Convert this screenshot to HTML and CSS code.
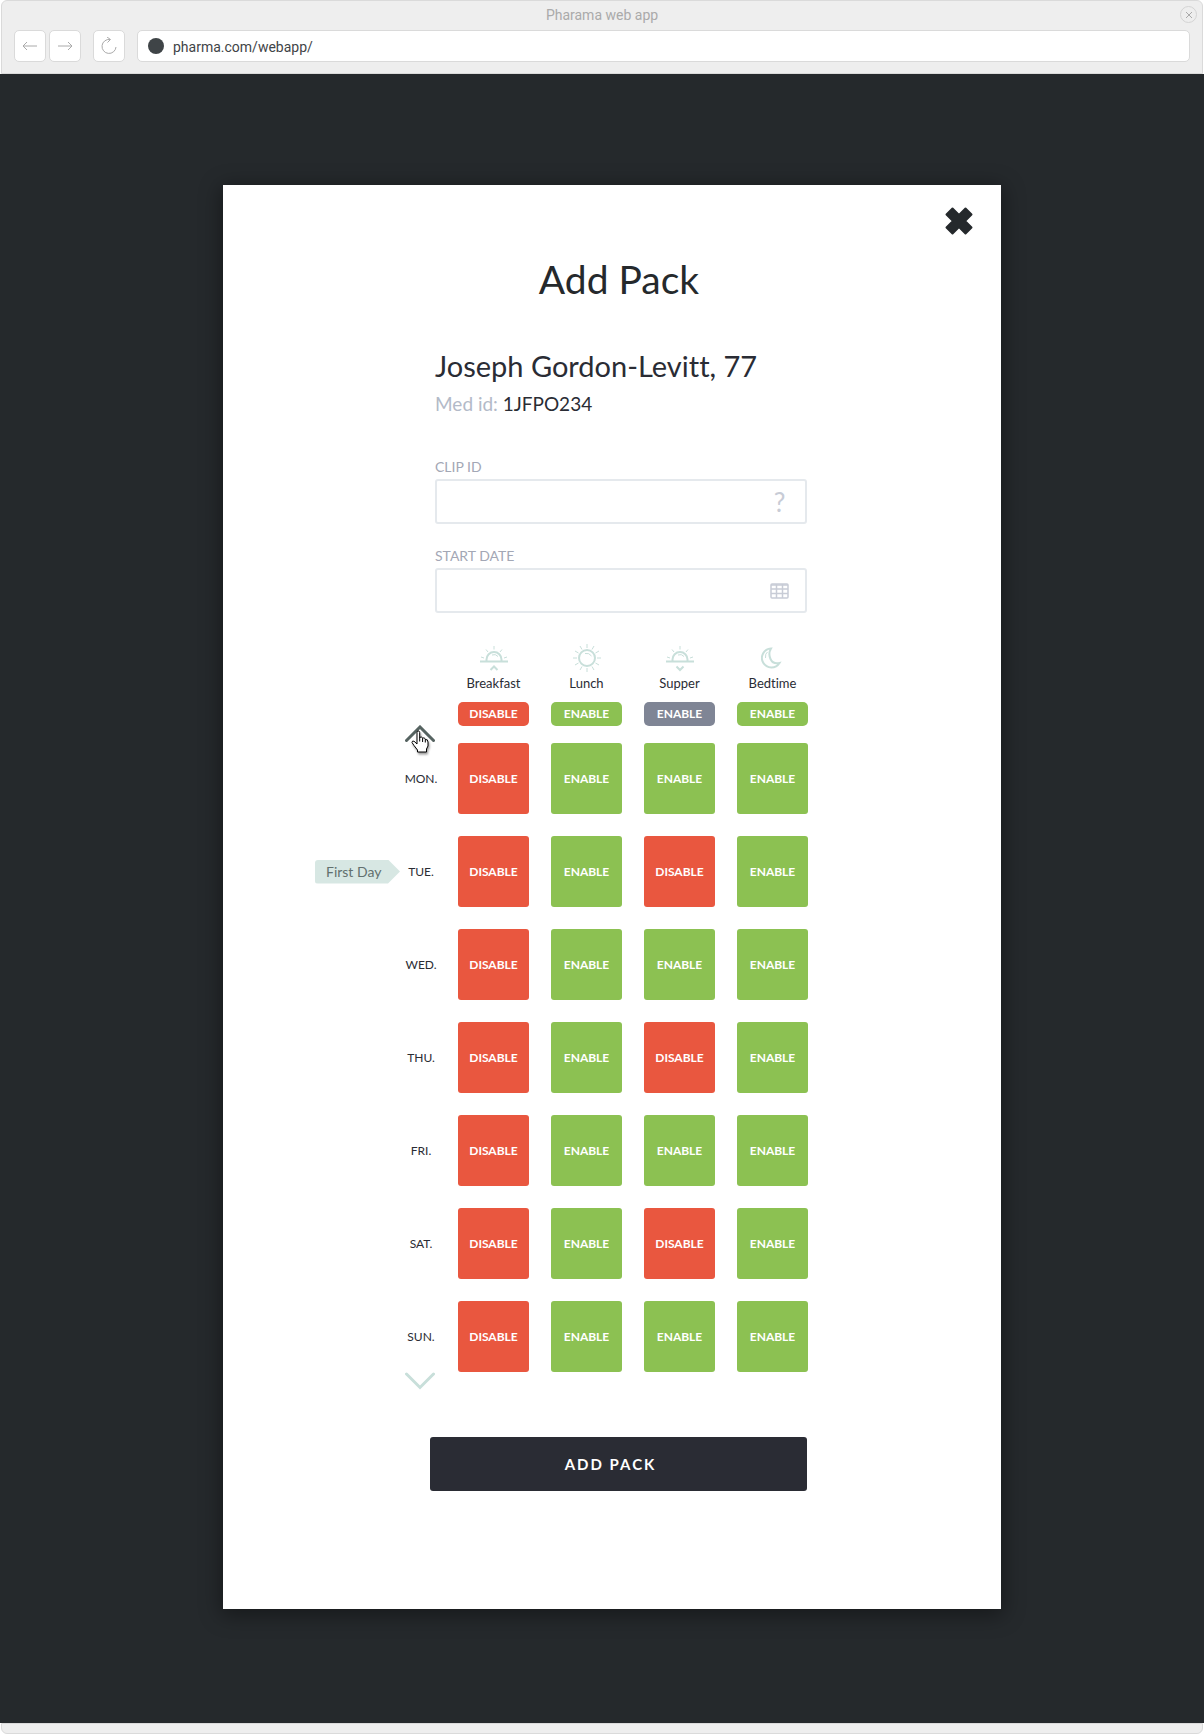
FILE: index.html
```html
<!DOCTYPE html>
<html lang="en">
<head>
<meta charset="utf-8">
<meta name="viewport" content="width=device-width, initial-scale=1">
<title>Pharama web app</title>
<link rel="stylesheet" href="styles.css">
</head>
<body>
<svg class="sprite" aria-hidden="true">
  <symbol id="half-sun" viewBox="0 0 28 26">
    <path d="M0 16.500H28M6.500 16V14.500a7.500 7.500 0 0 1 15 0V16" stroke-width="2"/>
    <path d="M12 10Q15.500 8.500 18 11.500"/>
    <path d="M14 1V4.500M6 4.500L8 7M22 4.500L20 7M1 12L4 13M27 12L24 13"/>
  </symbol>
</svg>

<header class="chrome">
  <div class="chrome-title">
    <span>Pharama web app</span>
    <button class="chrome-close" type="button" aria-label="Close window">
      <svg viewBox="0 0 8 8" width="8" height="8"><path d="M1 1L7 7M7 1L1 7"/></svg>
    </button>
  </div>
  <div class="chrome-bar">
    <div class="chrome-nav">
      <button class="chrome-button" type="button" aria-label="Back">
        <svg viewBox="0 0 16 10" width="16" height="10"><path d="M15 5H1M5 1L1 5L5 9"/></svg>
      </button>
      <button class="chrome-button" type="button" aria-label="Forward">
        <svg viewBox="0 0 16 10" width="16" height="10"><path d="M1 5H15M11 1L15 5L11 9"/></svg>
      </button>
    </div>
    <button class="chrome-button" type="button" aria-label="Reload">
      <svg viewBox="0 0 18 18" width="18" height="18"><path d="M10 2.500A7 7 0 1 0 16 10M7 0L10.500 2.500L7.500 5.500"/></svg>
    </button>
    <label class="address">
      <span class="site-dot"></span>
      <input type="text" value="pharma.com/webapp/" aria-label="Address">
    </label>
  </div>
</header>

<main class="stage">
  <section class="modal" role="dialog" aria-labelledby="modal-title">
    <button class="modal-close" type="button" aria-label="Close">
      <svg viewBox="0 0 28 28" width="28" height="28"><path d="M1.500 7.500L7.500 1.500L14 8L20.500 1.500L26.500 7.500L20 14L26.500 20.500L20.500 26.500L14 20L7.500 26.500L1.500 20.500L8 14Z"/></svg>
    </button>
    <form class="pack-form">
      <h1 class="title" id="modal-title">Add Pack</h1>

      <div class="patient">
        <h2 class="patient-name">Joseph Gordon-Levitt, 77</h2>
        <p class="patient-id"><span>Med id:</span> 1JFPO234</p>
      </div>

      <div class="field">
        <label for="clip-id">CLIP ID</label>
        <div class="field-box">
          <input id="clip-id" type="text">
          <button class="help" type="button" aria-label="Help">?</button>
        </div>
      </div>
      <div class="field">
        <label for="start-date">START DATE</label>
        <div class="field-box">
          <input id="start-date" type="text">
          <button type="button" aria-label="Pick a date">
            <svg class="calendar" viewBox="0 0 19 16" width="19" height="16"><rect x="1" y="1" width="17" height="14" rx="1"/><path d="M1 2H18M1 6H18M1 10.500H18M6.500 1V15M12.500 1V15"/></svg>
          </button>
        </div>
      </div>

      <table class="schedule">
        <thead>
          <tr>
            <td class="corner">
              <button class="shift shift-up" type="button" aria-label="Previous day">
                <svg viewBox="0 0 30 18" width="30" height="18"><path d="M1.500 15.500L15 2L28.500 15.500"/></svg>
                <svg class="pointer" viewBox="0 0 18 24" width="18" height="24"><path d="M6 13V2.500Q6 1 7.300 1T8.700 2.500V8Q9 6.800 10.300 7T11.600 8.500Q12 7.500 13.200 8T14.300 9.500Q17 9 17 12V16L15.500 19V22H6.500V20L3 15.500L1 12.500Q1 10.500 3 11.200L6 14ZM8.700 8V11.500M11.600 8.500V12M14.300 9.500V12.500"/></svg>
              </button>
            </td>
            <th scope="col">
              <svg class="meal-icon" viewBox="0 0 28 26" width="28" height="26"><use href="#half-sun"/><path d="M10.500 25L14 21.500L17.500 25" stroke-width="2"/></svg>
              <span>Breakfast</span>
              <button class="pill off" type="button">DISABLE</button>
            </th>
            <th scope="col">
              <svg class="meal-icon" viewBox="0 0 30 30" width="30" height="30"><circle cx="15" cy="15" r="8" stroke-width="2"/><path d="M13 10.500Q17 9.500 19.500 13"/><path d="M15 1V5M15 25V29M1 15H5M25 15H29M8 3L10 6.500M22 3L20 6.500M3 8L6.500 10M27 8L23.500 10M3 22L6.500 20M27 22L23.500 20M8 27L10 23.500M22 27L20 23.500"/></svg>
              <span>Lunch</span>
              <button class="pill on" type="button">ENABLE</button>
            </th>
            <th scope="col">
              <svg class="meal-icon" viewBox="0 0 28 26" width="28" height="26"><use href="#half-sun"/><path d="M10.500 21.500L14 25L17.500 21.500" stroke-width="2"/></svg>
              <span>Supper</span>
              <button class="pill mixed" type="button">ENABLE</button>
            </th>
            <th scope="col">
              <svg class="meal-icon" viewBox="0 0 24 22" width="24" height="22"><path d="M10 1.500A9.500 9.500 0 1 0 18.500 16Q12 17.500 9.500 12T10 1.500Z" stroke-width="2"/><path d="M4.500 11Q4 6.500 6.500 5"/></svg>
              <span>Bedtime</span>
              <button class="pill on" type="button">ENABLE</button>
            </th>
          </tr>
        </thead>
        <tbody>
          <tr>
            <th scope="row"><div class="day"><span>MON.</span></div></th>
            <td><button class="dose off" type="button">DISABLE</button></td>
            <td><button class="dose on" type="button">ENABLE</button></td>
            <td><button class="dose on" type="button">ENABLE</button></td>
            <td><button class="dose on" type="button">ENABLE</button></td>
          </tr>
          <tr>
            <th scope="row"><div class="day"><em class="tag">First Day</em><span>TUE.</span></div></th>
            <td><button class="dose off" type="button">DISABLE</button></td>
            <td><button class="dose on" type="button">ENABLE</button></td>
            <td><button class="dose off" type="button">DISABLE</button></td>
            <td><button class="dose on" type="button">ENABLE</button></td>
          </tr>
          <tr>
            <th scope="row"><div class="day"><span>WED.</span></div></th>
            <td><button class="dose off" type="button">DISABLE</button></td>
            <td><button class="dose on" type="button">ENABLE</button></td>
            <td><button class="dose on" type="button">ENABLE</button></td>
            <td><button class="dose on" type="button">ENABLE</button></td>
          </tr>
          <tr>
            <th scope="row"><div class="day"><span>THU.</span></div></th>
            <td><button class="dose off" type="button">DISABLE</button></td>
            <td><button class="dose on" type="button">ENABLE</button></td>
            <td><button class="dose off" type="button">DISABLE</button></td>
            <td><button class="dose on" type="button">ENABLE</button></td>
          </tr>
          <tr>
            <th scope="row"><div class="day"><span>FRI.</span></div></th>
            <td><button class="dose off" type="button">DISABLE</button></td>
            <td><button class="dose on" type="button">ENABLE</button></td>
            <td><button class="dose on" type="button">ENABLE</button></td>
            <td><button class="dose on" type="button">ENABLE</button></td>
          </tr>
          <tr>
            <th scope="row"><div class="day"><span>SAT.</span></div></th>
            <td><button class="dose off" type="button">DISABLE</button></td>
            <td><button class="dose on" type="button">ENABLE</button></td>
            <td><button class="dose off" type="button">DISABLE</button></td>
            <td><button class="dose on" type="button">ENABLE</button></td>
          </tr>
          <tr>
            <th scope="row"><div class="day"><span>SUN.</span></div></th>
            <td><button class="dose off" type="button">DISABLE</button></td>
            <td><button class="dose on" type="button">ENABLE</button></td>
            <td><button class="dose on" type="button">ENABLE</button></td>
            <td><button class="dose on" type="button">ENABLE</button></td>
          </tr>
        </tbody>
      </table>
      <button class="shift shift-down" type="button" aria-label="Next day">
        <svg viewBox="0 0 30 18" width="30" height="18"><path d="M1.500 2L15 15.500L28.500 2"/></svg>
      </button>

      <button class="submit" type="submit">ADD PACK</button>
    </form>
  </section>
</main>

<footer class="window-foot"></footer>
</body>
</html>
```
FILE: styles.css
```css
* {
  box-sizing: border-box;
}

body {
  margin: 0;
  min-height: 100vh;
  display: flex;
  flex-direction: column;
  background: #fff;
  color: #2a2c34;
  font-family: Lato, "Open Sans", sans-serif;
  font-variant-ligatures: none;
}

button,
input {
  margin: 0;
  padding: 0;
  border: 0;
  background: none;
  color: inherit;
  font: inherit;
}

button {
  cursor: pointer;
}

svg {
  display: block;
  fill: none;
  stroke: currentColor;
}

.sprite {
  position: absolute;
  width: 0;
  height: 0;
}

/* Browser window */
.chrome {
  margin: 0 1px;
  padding-bottom: 11px;
  border: 1px solid #dadada;
  border-radius: 6px 6px 0 0;
  background: #eee;
  font-family: Roboto, sans-serif;
  font-size: 14px;
}

.chrome-title {
  display: grid;
  grid-template-columns: 1fr auto 1fr;
  align-items: center;
  height: 29px;
  padding: 0 5px 2px;
  color: #aaa;
}

.chrome-title span {
  grid-column: 2;
}

.chrome-close {
  display: flex;
  align-items: center;
  justify-content: center;
  justify-self: end;
  width: 17px;
  height: 17px;
  border: 1px solid #d4d4d4;
  border-radius: 50%;
}

.chrome-bar {
  display: flex;
  gap: 12px;
  padding: 0 12px;
}

.chrome-nav {
  display: flex;
  gap: 3px;
}

.chrome-button {
  display: flex;
  align-items: center;
  justify-content: center;
  width: 32px;
  height: 32px;
  border: 1px solid #dadada;
  border-radius: 5px;
  background: #fff;
  color: #aaa;
}

.address {
  flex: 1;
  display: flex;
  align-items: center;
  gap: 9px;
  height: 32px;
  padding: 0 10px;
  border: 1px solid #dadada;
  border-radius: 5px;
  background: #fff;
  color: #3f4447;
}

.address input {
  flex: 1;
  height: 100%;
  padding-top: 2px;
}

.site-dot {
  width: 16px;
  height: 16px;
  border-radius: 50%;
  background: #3f4447;
}

.window-foot {
  height: 11px;
  margin: 0 1px;
  border: 1px solid #dadada;
  border-radius: 0 0 6px 6px;
  background: #eee;
}

/* Dialog */
.stage {
  flex: 1;
  display: flex;
  padding: 111px 203px 114px 223px;
  background: #25292c;
}

.modal {
  flex: 1;
  display: flex;
  flex-direction: column;
  padding: 22px 28px 100px 92px;
  background: #fff;
  box-shadow: 0 4px 20px 2px rgba(0, 0, 0, 0.4);
}

.modal-close {
  align-self: flex-end;
  color: #25292c;
}

.modal-close path {
  fill: currentColor;
  stroke-width: 2;
  stroke-linejoin: round;
}

.pack-form {
  display: flex;
  flex-direction: column;
  margin-right: 165px;
}

.title {
  margin: 20px 0 0 115px;
  color: #25292c;
  font-size: 39px;
  font-weight: 400;
  line-height: 48px;
  text-align: center;
}

.patient,
.field {
  margin-left: 120px;
}

.patient {
  margin-top: 45px;
}

.patient-name {
  margin: 0;
  font-size: 29px;
  font-weight: 400;
  line-height: 36px;
  white-space: nowrap;
}

.patient-id {
  margin: 6px 0 0;
  font-size: 19px;
  line-height: 28px;
}

.patient-id span {
  color: #b3bac8;
}

.field {
  display: flex;
  flex-direction: column;
  gap: 2px;
  margin-top: 22px;
  margin-right: 1px;
  color: #a3a7b5;
  font-size: 14px;
  line-height: 20px;
}

.patient + .field {
  margin-top: 39px;
}

.field-box {
  display: flex;
  align-items: center;
  height: 45px;
  padding-right: 16px;
  border: 2px solid #e5e9ed;
  border-radius: 3px;
  color: #c8ccd6;
}

.field-box input {
  flex: 1;
  align-self: stretch;
  padding: 0 12px;
  color: #2a2c34;
}

.help {
  width: 19px;
  font-size: 26px;
  line-height: 36px;
}

.calendar {
  stroke-width: 1.5;
}

/* Weekly schedule */
.schedule {
  width: 100%;
  margin-top: 30px;
  border-collapse: collapse;
}

.schedule th,
.schedule td {
  padding: 0 22px 22px 0;
  font-weight: 400;
}

.schedule th:last-child,
.schedule td:last-child {
  padding-right: 0;
}

.schedule tbody tr:last-child > * {
  padding-bottom: 0;
}

.schedule thead th {
  padding-bottom: 17px;
  font-size: 13px;
  line-height: 20px;
}

.schedule thead .corner {
  padding: 0 23px 0 0;
  vertical-align: bottom;
}

.schedule tbody th {
  width: 143px;
  padding-right: 21px;
}

.meal-icon {
  display: block;
  height: 30px;
  margin: 0 auto;
  color: #c8dfda;
}

.pill,
.dose {
  display: block;
  width: 71px;
  color: #fff;
  font-size: 12px;
  font-weight: 700;
}

.pill {
  height: 24px;
  margin-top: 9px;
  border-radius: 5px;
}

.dose {
  height: 71px;
  border-radius: 3px;
}

.on {
  background: #8cc152;
}

.off {
  background: #e9573f;
}

.mixed {
  background: #7f8595;
}

.day {
  display: flex;
  align-items: center;
  justify-content: flex-end;
  gap: 5px;
  font-size: 12px;
}

.day span {
  width: 32px;
  display: flex;
  justify-content: center;
}

.tag {
  flex: 1;
  height: 24px;
  padding-left: 11px;
  border-radius: 3px;
  background: #d7e7e3;
  clip-path: polygon(0 0, 73px 0, 100% 50%, 73px 100%, 0 100%);
  color: #62706e;
  font-size: 14px;
  font-style: normal;
  line-height: 24px;
  text-align: left;
}

.shift {
  position: relative;
  display: block;
  width: 30px;
  height: 18px;
}

.shift > svg:first-child {
  stroke-width: 3;
  stroke-linecap: round;
}

.shift-up {
  margin-left: auto;
  color: #566361;
}

.shift-down {
  margin-left: 90px;
  color: #c8dfda;
}

/* Hand cursor resting on the arrow */
.pointer {
  position: absolute;
  top: 5px;
  left: 6px;
  fill: #fff;
  color: #000;
  filter: drop-shadow(1px 2px 1px rgba(0, 0, 0, 0.4));
}

.submit {
  height: 54px;
  margin: 47px 1px 0 115px;
  padding-right: 16px;
  border-radius: 3px;
  background: #2a2c34;
  color: #fff;
  font-size: 15px;
  font-weight: 700;
  letter-spacing: 2px;
}
```
